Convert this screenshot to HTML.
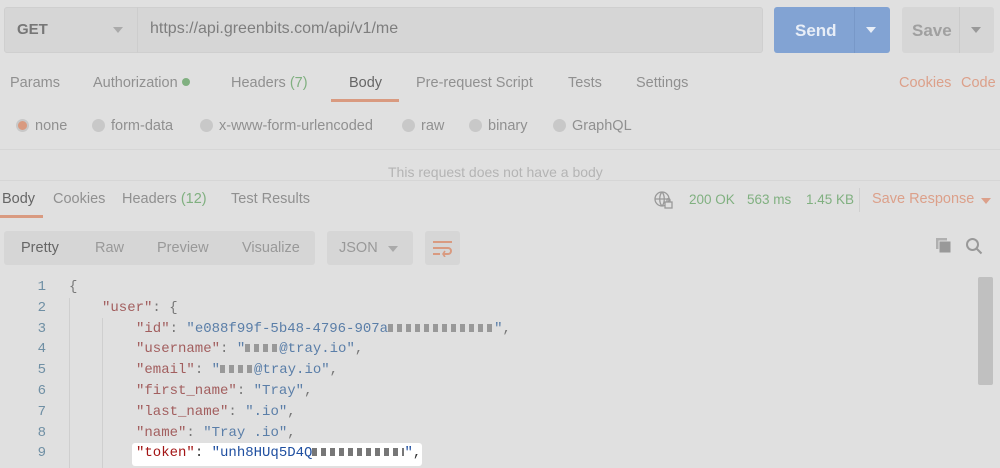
<!DOCTYPE html>
<html><head><style>
*{margin:0;padding:0;box-sizing:border-box}
body{width:1000px;height:468px;background:#e0e0e0;font-family:"Liberation Sans",sans-serif;position:relative;overflow:hidden;color:#8a8a8a}
.a{position:absolute;white-space:nowrap}
.code{font-family:"Liberation Mono",monospace;font-size:14px}
.k{color:#a25e5e}.s{color:#5a7ea8}.p{color:#777}
.dot{display:inline-block;width:13px;height:13px;border-radius:50%;background:#c8c8c8;vertical-align:-2px;margin-right:6px}
.m{display:inline-block;height:8px;vertical-align:0;background:repeating-linear-gradient(90deg,#999 0 5px,transparent 5px 9px)}
</style></head><body>
<div class="a" style="left:4px;top:7px;width:759px;height:46px;background:#d6d6d6;border:1px solid #cfcfcf;border-radius:3px"></div>
<div class="a" style="left:137px;top:7px;width:1px;height:46px;background:#cdcdcd"></div>
<div class="a" style="left:17px;top:21px;font-size:15px;font-weight:bold;color:#777">GET</div>
<div class="a" style="left:113px;top:27px;width:0;height:0;border-left:5px solid transparent;border-right:5px solid transparent;border-top:6px solid #aaa"></div>
<div class="a" style="left:150px;top:20px;font-size:16px;color:#7e7e7e">https://api.greenbits.com/api/v1/me</div>
<div class="a" style="left:774px;top:7px;width:116px;height:46px;background:#82a3d3;border-radius:3px"></div>
<div class="a" style="left:854px;top:7px;width:1px;height:46px;background:#7898c8"></div>
<div class="a" style="left:795px;top:21px;font-size:17px;font-weight:bold;color:#e8eef7">Send</div>
<div class="a" style="left:866px;top:27px;border-left:5px solid transparent;border-right:5px solid transparent;border-top:6px solid #e8eef7"></div>
<div class="a" style="left:902px;top:7px;width:92px;height:46px;background:#d6d6d6;border-radius:3px"></div>
<div class="a" style="left:959px;top:7px;width:1px;height:46px;background:#cbcbcb"></div>
<div class="a" style="left:912px;top:21px;font-size:17px;font-weight:bold;color:#a0a0a0">Save</div>
<div class="a" style="left:971px;top:27px;border-left:5px solid transparent;border-right:5px solid transparent;border-top:6px solid #999"></div>
<div class="a" style="top:75px;font-size:14.5px;left:10px;color:#909090">Params</div>
<div class="a" style="top:75px;font-size:14.5px;left:93px;color:#909090">Authorization <span style="display:inline-block;width:8px;height:8px;border-radius:50%;background:#80b080;vertical-align:1px"></span></div>
<div class="a" style="top:75px;font-size:14.5px;left:231px;color:#909090">Headers <span style="color:#80b080">(7)</span></div>
<div class="a" style="top:75px;font-size:14.5px;left:349px;color:#666">Body</div>
<div class="a" style="left:331px;top:99px;width:68px;height:3px;background:#d99a80"></div>
<div class="a" style="top:75px;font-size:14.5px;left:416px;color:#909090">Pre-request Script</div>
<div class="a" style="top:75px;font-size:14.5px;left:568px;color:#909090">Tests</div>
<div class="a" style="top:75px;font-size:14.5px;left:636px;color:#909090">Settings</div>
<div class="a" style="top:75px;font-size:14.5px;left:899px;color:#dca08a">Cookies</div>
<div class="a" style="top:75px;font-size:14.5px;left:961px;color:#dca08a">Code</div>
<div class="a" style="top:118px;font-size:14.5px;left:16px;color:#909090"><span class="dot" style="background:#d99a80;border:2px solid #c8c8c8"></span>none</div>
<div class="a" style="top:118px;font-size:14.5px;left:92px;color:#909090"><span class="dot"></span>form-data</div>
<div class="a" style="top:118px;font-size:14.5px;left:200px;color:#909090"><span class="dot"></span>x-www-form-urlencoded</div>
<div class="a" style="top:118px;font-size:14.5px;left:402px;color:#909090"><span class="dot"></span>raw</div>
<div class="a" style="top:118px;font-size:14.5px;left:469px;color:#909090"><span class="dot"></span>binary</div>
<div class="a" style="top:118px;font-size:14.5px;left:553px;color:#909090"><span class="dot"></span>GraphQL</div>
<div class="a" style="left:0;top:149px;width:1000px;height:1px;background:#d6d6d6"></div>
<div class="a" style="top:164px;font-size:14px;left:388px;color:#b4b4b4">This request does not have a body</div>
<div class="a" style="left:0;top:180px;width:1000px;height:1px;background:#d6d6d6"></div>
<div class="a" style="top:191px;font-size:14.5px;left:2px;color:#666">Body</div>
<div class="a" style="left:0;top:215px;width:43px;height:3px;background:#d99a80"></div>
<div class="a" style="top:191px;font-size:14.5px;left:53px;color:#909090">Cookies</div>
<div class="a" style="top:191px;font-size:14.5px;left:122px;color:#909090">Headers <span style="color:#80b080">(12)</span></div>
<div class="a" style="top:191px;font-size:14.5px;left:231px;color:#909090">Test Results</div>
<svg class="a" style="left:654px;top:191px" width="20" height="19" viewBox="0 0 20 19" fill="none" stroke="#999" stroke-width="1.3"><circle cx="8" cy="8" r="7"/><path d="M1 8h14M8 1c-3 3-3 11 0 14M8 1c3 3 3 11 0 14"/><rect x="11" y="11" width="7" height="6" fill="#e0e0e0"/><path d="M13 11v-2a1.5 1.5 0 013 0v2"/></svg>
<div class="a" style="top:192px;font-size:13.5px;left:689px;color:#80b080">200 OK</div>
<div class="a" style="top:192px;font-size:13.5px;left:747px;color:#80b080">563 ms</div>
<div class="a" style="top:192px;font-size:13.5px;left:806px;color:#80b080">1.45 KB</div>
<div class="a" style="left:859px;top:188px;width:1px;height:24px;background:#d0d0d0"></div>
<div class="a" style="top:191px;font-size:14.5px;left:872px;color:#dca08a">Save Response</div>
<div class="a" style="left:981px;top:198px;border-left:5px solid transparent;border-right:5px solid transparent;border-top:6px solid #dca08a"></div>
<div class="a" style="left:4px;top:231px;width:311px;height:34px;background:#d6d6d6;border-radius:3px"></div>
<div class="a" style="top:240px;font-size:14.5px;left:21px;color:#666">Pretty</div>
<div class="a" style="top:240px;font-size:14.5px;left:95px;color:#999">Raw</div>
<div class="a" style="top:240px;font-size:14.5px;left:157px;color:#999">Preview</div>
<div class="a" style="top:240px;font-size:14.5px;left:242px;color:#999">Visualize</div>
<div class="a" style="left:327px;top:231px;width:86px;height:34px;background:#d6d6d6;border-radius:3px"></div>
<div class="a" style="top:240px;font-size:14.5px;left:339px;color:#999">JSON</div>
<div class="a" style="left:388px;top:246px;border-left:5px solid transparent;border-right:5px solid transparent;border-top:6px solid #aaa"></div>
<div class="a" style="left:425px;top:231px;width:35px;height:34px;background:#d6d6d6;border-radius:3px"></div>
<svg class="a" style="left:432px;top:239px" width="22" height="18" viewBox="0 0 22 18" fill="none" stroke="#d99a80" stroke-width="2"><path d="M1 3h19M1 9h15a3 3 0 010 6h-4M1 15h7"/><path d="M13 12l-2 3 2 3" stroke-width="1.6"/></svg>
<svg class="a" style="left:935px;top:237px" width="18" height="18" viewBox="0 0 18 18"><rect x="1" y="1" width="11" height="11" fill="#b0b0b0"/><rect x="4" y="4" width="12" height="12" fill="#999" stroke="#e0e0e0"/></svg>
<svg class="a" style="left:965px;top:237px" width="18" height="18" viewBox="0 0 18 18" fill="none" stroke="#999" stroke-width="2"><circle cx="7.5" cy="7.5" r="5.5"/><path d="M11.5 11.5l5 5"/></svg>
<div class="a" style="left:978px;top:277px;width:15px;height:108px;background:#c0c0c0;border-radius:2px"></div>
<div class="a code" style="left:0;top:277px;width:46px;text-align:right;line-height:20.8px;color:#6f8fa4">1<br>2<br>3<br>4<br>5<br>6<br>7<br>8<br>9</div>
<div class="a" style="left:69px;top:298px;width:1px;height:170px;background:#cfcfcf"></div>
<div class="a" style="left:102px;top:318px;width:1px;height:150px;background:#cfcfcf"></div>
<div class="a" style="left:132px;top:443px;width:290px;height:23px;background:#fff;border-radius:3px"></div>
<div class="a code" style="left:69px;top:277px;line-height:20.8px;color:#777">
<div>{</div>
<div style="padding-left:33px"><span class="k">"user"</span>: {</div>
<div style="padding-left:67px"><span class="k">"id"</span>: <span class="s">"e088f99f-5b48-4796-907a<span class="m" style="width:106px"></span>"</span>,</div>
<div style="padding-left:67px"><span class="k">"username"</span>: <span class="s">"<span class="m" style="width:34px"></span>@tray.io"</span>,</div>
<div style="padding-left:67px"><span class="k">"email"</span>: <span class="s">"<span class="m" style="width:34px"></span>@tray.io"</span>,</div>
<div style="padding-left:67px"><span class="k">"first_name"</span>: <span class="s">"Tray"</span>,</div>
<div style="padding-left:67px"><span class="k">"last_name"</span>: <span class="s">".io"</span>,</div>
<div style="padding-left:67px"><span class="k">"name"</span>: <span class="s">"Tray .io"</span>,</div>
<div style="padding-left:67px"><span style="color:#a31515">"token"</span><span style="color:#333">: </span><span style="color:#1f4fa0">"unh8HUq5D4Q<span class="m" style="width:92px;background:repeating-linear-gradient(90deg,#777 0 5px,transparent 5px 9px)"></span>"</span><span style="color:#333">,</span></div>
</div>
</body></html>
